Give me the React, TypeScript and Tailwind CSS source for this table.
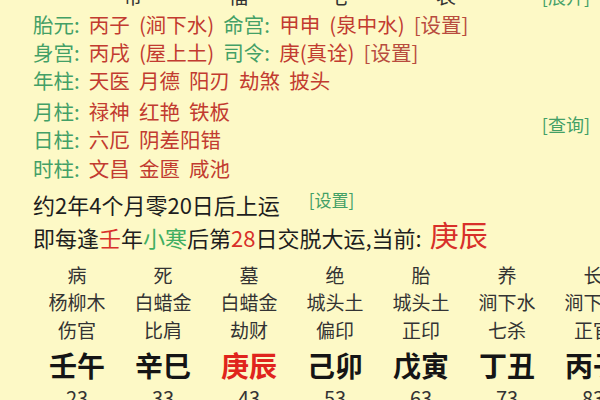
const GREEN = 'text-[#43a066]';
const RED = 'text-[#c23b30]';

const cols = [
  { stage: '病', nayin: '杨柳木', god: '伤官', pillar: '壬午', age: '23' },
  { stage: '死', nayin: '白蜡金', god: '比肩', pillar: '辛巳', age: '33' },
  { stage: '墓', nayin: '白蜡金', god: '劫财', pillar: '庚辰', age: '43', current: true },
  { stage: '绝', nayin: '城头土', god: '偏印', pillar: '己卯', age: '53' },
  { stage: '胎', nayin: '城头土', god: '正印', pillar: '戊寅', age: '63' },
  { stage: '养', nayin: '涧下水', god: '七杀', pillar: '丁丑', age: '73' },
  { stage: '长', nayin: '涧下水', god: '正官', pillar: '丙子', age: '83' },
];

function Label({ text }: { text: string }) {
  return <span className={GREEN}>{text}: </span>;
}

export default function App() {
  return (
    <div
      className="w-[600px] h-[400px] overflow-hidden bg-[#fdf9c6] text-[20px] text-[#222]"
      style={{ fontFamily: '"Noto Sans CJK SC", "Noto Sans", sans-serif' }}
    >
      {/* header row, mostly scrolled off */}
      <div className="mt-[-18px] h-[28px] leading-[28px] flex items-center pr-[10px]">
        <span className="ml-[123px] text-[#333]">帝</span>
        <span className="ml-[85px] text-[#333]">福</span>
        <span className="ml-[80px] text-[#333]">宅</span>
        <span className="ml-[88px] text-[#333]">表</span>
        <span className={`ml-auto text-[18px] ${GREEN}`}>[展开]</span>
      </div>

      <div className="ml-[33px] mr-[10px] whitespace-nowrap">
        <div className="text-[20.5px] [word-spacing:4.5px]">
          <div className="h-[28px] leading-[28px]">
            <Label text="胎元" />
            <span className={RED}>丙子 (涧下水) </span>
            <Label text="命宫" />
            <span className={RED}>甲申 (泉中水) </span>
            <span className="text-[#b84c3e]">[设置]</span>
          </div>
          <div className="h-[28px] leading-[28px]">
            <Label text="身宫" />
            <span className={RED}>丙戌 (屋上土) </span>
            <Label text="司令" />
            <span className={RED}>庚(真诠) </span>
            <span className="text-[#b84c3e]">[设置]</span>
          </div>
          <div className="h-[29px] leading-[29px]">
            <Label text="年柱" />
            <span className={RED}>天医 月德 阳刃 劫煞 披头</span>
          </div>
          <div className="flex items-center">
            <div className="flex flex-col">
              <div className="h-[30px] leading-[30px] pt-[1px]">
                <Label text="月柱" />
                <span className={RED}>禄神 红艳 铁板</span>
              </div>
              <div className="h-[29px] leading-[29px]">
                <Label text="日柱" />
                <span className={RED}>六厄 阴差阳错</span>
              </div>
            </div>
            <span className={`ml-auto text-[18px] ${GREEN}`}>[查询]</span>
          </div>
          <div className="h-[29px] leading-[29px]">
            <Label text="时柱" />
            <span className={RED}>文昌 金匮 咸池</span>
          </div>
        </div>

        <div className="mt-[7px] h-[28px] leading-[28px] flex text-[22px]">
          <span className="text-[#1e1e1e]">约2年4个月零20日后上运</span>
          <span className={`ml-[29px] text-[17px] leading-[20px] ${GREEN}`}>[设置]</span>
        </div>
        <div className="h-[32px] leading-[32px] text-[22px] text-[#1e1e1e]">
          即每逢<span className="text-[#d8302a]">壬</span>年<span className="text-[#3fae62]">小寒</span>后第
          <span className="text-[#d8302a]">28</span>日交脱大运,当前:
          <span className="ml-[8px] text-[29px] text-[#d8302a]">庚辰</span>
        </div>
      </div>

      {/* luck pillars grid */}
      <div className="mt-[12px] ml-[34px] flex whitespace-nowrap">
        {cols.map((c) => (
          <div key={c.age} className="w-[86px] shrink-0 flex flex-col items-center text-[#333]">
            <div className="h-[26px] leading-[26px] text-[19px]">{c.stage}</div>
            <div className="h-[28px] leading-[28px] text-[19px]">{c.nayin}</div>
            <div className="h-[28px] leading-[28px] text-[19px]">{c.god}</div>
            <div
              className={`mt-[4px] h-[34px] leading-[34px] text-[28px] font-bold ${
                c.current ? 'text-[#e0241c]' : 'text-[#151515]'
              }`}
            >
              {c.pillar}
            </div>
            <div className="mt-[2px] h-[28px] leading-[28px] text-[20px]">{c.age}</div>
          </div>
        ))}
      </div>
    </div>
  );
}
